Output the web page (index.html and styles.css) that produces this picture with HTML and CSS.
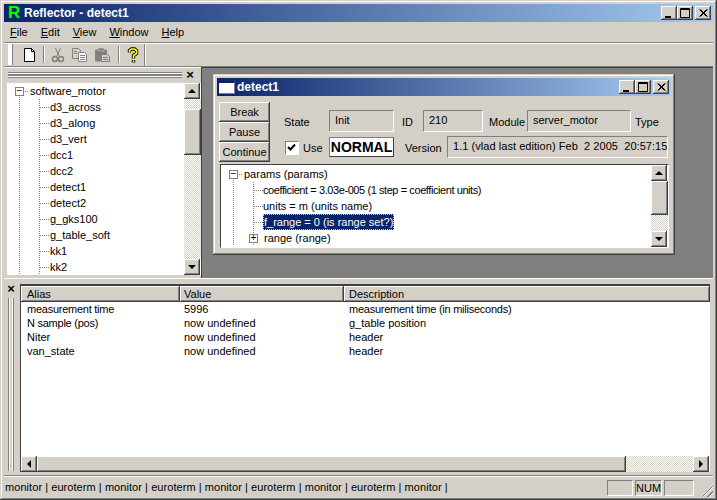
FILE: index.html
```html
<!DOCTYPE html>
<html lang="en">
<head>
    <meta charset="UTF-8">
    <title>Reflector - detect1</title>
    <link rel="stylesheet" href="styles.css">
</head>
<body>
    <div class="app">
        <div class="titlebar app-title">
            <span class="app-logo">R</span>
            <span class="title-text">Reflector - detect1</span>
            <div class="win-buttons">
                <span class="win-btn raised"><svg width="16" height="14"><path d="M4 10h6v2H4z" fill="#000"/></svg></span>
                <span class="win-btn raised"><svg width="16" height="14"><path d="M3.500 2.500h9v9h-9zM3 3.500h10" fill="none" stroke="#000"/></svg></span>
                <span class="win-btn raised close"><svg width="16" height="14"><path d="M4.500 3.500l7 7M5.500 3.500l7 7M11.500 3.500l-7 7M12.500 3.500l-7 7" fill="none" stroke="#000"/></svg></span>
            </div>
        </div>

        <div class="menubar">
            <span class="menu-item"><u>F</u>ile</span>
            <span class="menu-item"><u>E</u>dit</span>
            <span class="menu-item"><u>V</u>iew</span>
            <span class="menu-item"><u>W</u>indow</span>
            <span class="menu-item"><u>H</u>elp</span>
        </div>

        <div class="toolbar">
            <span class="tb-grip"></span>
            <span class="tb-icon tb-first">
                <svg width="16" height="16"><path d="M3.500 1.500h7l3 3v10h-10z" fill="#fff" stroke="#000"/><path d="M10.500 1.500v3h3" fill="none" stroke="#000"/></svg>
            </span>
            <span class="tb-sep"></span>
            <span class="tb-icon">
                <svg width="16" height="16"><path d="M5.500 1l3.500 8M10.500 1L7 9" fill="none" stroke="#808080"/><circle cx="5" cy="12" r="2.500" fill="none" stroke="#808080" stroke-width="1.500"/><circle cx="11" cy="12" r="2.500" fill="none" stroke="#808080" stroke-width="1.500"/></svg>
            </span>
            <span class="tb-icon">
                <svg width="18" height="16"><path d="M1.500 1.500h6l2 2v8h-8z" fill="#d4d0c8" stroke="#808080"/><path d="M7.500 5.500h6l2 2v7h-8z" fill="#fff" stroke="#808080"/><path d="M9 8.500h5M9 10.500h5M9 12.500h5M3 4.500h3M3 6.500h3" stroke="#808080"/></svg>
            </span>
            <span class="tb-icon">
                <svg width="18" height="16"><path d="M1 3.500q0-1 1-1h10q1 0 1 1v10q0 1-1 1H2q-1 0-1-1z" fill="#808080"/><path d="M4 1h6v3H4z" fill="#808080" stroke="#d4d0c8" stroke-width=".5"/><path d="M7.500 7.500h6l2 2v5h-8z" fill="#d4d0c8" stroke="#808080"/><path d="M9 10.500h5M9 12.500h5" stroke="#808080"/></svg>
            </span>
            <span class="tb-sep"></span>
            <span class="tb-icon">
                <svg width="16" height="16"><path d="M4.500 5.500V3.500L6.500 2h3l2 1.500v3L8.500 8.500v3" fill="none" stroke="#000" stroke-width="3.400"/><path d="M8.500 13v2.500" stroke="#000" stroke-width="3.400"/><path d="M4.500 5.500V3.500L6.500 2h3l2 1.500v3L8.500 8.500v3M8.500 13.200v2" fill="none" stroke="#ff0" stroke-width="1.600"/></svg>
            </span>
            <span class="tb-end"></span>
        </div>

        <div class="main-row">
            <div class="side-pane">
                <div class="side-head">
                    <span class="grip-h"></span>
                    <span class="pane-close">×</span>
                </div>
                <div class="side-body">
                    <div class="tree side-tree">
                        <div class="node root"><span class="expander">−</span>software_motor</div>
                        <div class="node leaf">d3_across</div>
                        <div class="node leaf">d3_along</div>
                        <div class="node leaf">d3_vert</div>
                        <div class="node leaf">dcc1</div>
                        <div class="node leaf">dcc2</div>
                        <div class="node leaf">detect1</div>
                        <div class="node leaf">detect2</div>
                        <div class="node leaf">g_gks100</div>
                        <div class="node leaf">g_table_soft</div>
                        <div class="node leaf">kk1</div>
                        <div class="node leaf">kk2</div>
                    </div>
                    <div class="vscroll side-scroll">
                        <span class="sb-btn raised"><i class="arrow-up"></i></span>
                        <span class="sb-track short"></span>
                        <span class="sb-thumb raised side-thumb"></span>
                        <span class="sb-track"></span>
                        <span class="sb-btn raised"><i class="arrow-down"></i></span>
                    </div>
                </div>
            </div>

            <div class="mdi-area">
                <div class="child-window">
                    <div class="titlebar child-title">
                        <span class="child-icon"></span>
                        <span class="title-text">detect1</span>
                        <div class="win-buttons">
                            <span class="win-btn raised"><svg width="16" height="14"><path d="M4 10h6v2H4z" fill="#000"/></svg></span>
                            <span class="win-btn raised"><svg width="16" height="14"><path d="M3.500 2.500h9v9h-9zM3 3.500h10" fill="none" stroke="#000"/></svg></span>
                            <span class="win-btn raised close"><svg width="16" height="14"><path d="M4.500 3.500l7 7M5.500 3.500l7 7M11.500 3.500l-7 7M12.500 3.500l-7 7" fill="none" stroke="#000"/></svg></span>
                        </div>
                    </div>

                    <div class="child-panel">
                        <div class="cmd-buttons">
                            <span class="cmd raised">Break</span>
                            <span class="cmd raised">Pause</span>
                            <span class="cmd raised">Continue</span>
                        </div>
                        <div class="info">
                            <div class="info-row first">
                                <span class="lbl lbl-state">State</span>
                                <span class="field f-state">Init</span>
                                <span class="lbl lbl-id">ID</span>
                                <span class="field f-id">210</span>
                                <span class="lbl lbl-module">Module</span>
                                <span class="field f-module">server_motor</span>
                                <span class="lbl">Type</span>
                            </div>
                            <div class="info-row second">
                                <span class="check"><svg width="9" height="9"><path d="M1 4l2.500 2.500L8 1.500" fill="none" stroke="#000" stroke-width="2"/></svg></span>
                                <span class="lbl lbl-use">Use</span>
                                <span class="normal-box">NORMAL</span>
                                <span class="lbl lbl-version">Version</span>
                                <span class="field f-version">1.1 (vlad last edition) Feb&nbsp; 2 2005&nbsp; 20:57:15</span>
                            </div>
                        </div>
                    </div>

                    <div class="params-box">
                        <div class="tree params-tree">
                            <div class="node proot"><span class="expander">−</span>params (params)</div>
                            <div class="node pleaf tighter">coefficient = 3.03e-005 (1 step = coefficient units)</div>
                            <div class="node pleaf">units = m (units name)</div>
                            <div class="node pleaf"><span class="selected">f_range = 0 (is range set?)</span></div>
                            <div class="node pbranch"><span class="expander">+</span>range (range)</div>
                        </div>
                        <div class="vscroll params-scroll">
                            <span class="sb-btn raised"><i class="arrow-up"></i></span>
                            <span class="sb-thumb raised params-thumb"></span>
                            <span class="sb-track"></span>
                            <span class="sb-btn raised"><i class="arrow-down"></i></span>
                        </div>
                    </div>
                </div>
            </div>
        </div>

        <div class="bottom-pane">
            <div class="bottom-side">
                <span class="pane-close">×</span>
                <span class="grip-v"></span>
            </div>
            <div class="list-frame">
                <div class="list-head">
                    <span class="col-head raised">Alias</span>
                    <span class="col-head raised">Value</span>
                    <span class="col-head raised">Description</span>
                </div>
                <div class="list-body">
                    <div class="list-row"><span class="tight">measurement time</span><span>5996</span><span class="tight">measurement time (in miliseconds)</span></div>
                    <div class="list-row"><span class="tight">N sample (pos)</span><span>now undefined</span><span>g_table position</span></div>
                    <div class="list-row"><span>Niter</span><span>now undefined</span><span>header</span></div>
                    <div class="list-row"><span>van_state</span><span>now undefined</span><span>header</span></div>
                </div>
                <div class="hscroll">
                    <span class="sb-btn raised"><i class="arrow-left"></i></span>
                    <span class="sb-thumb raised h-thumb"></span>
                    <span class="sb-track"></span>
                    <span class="sb-btn raised"><i class="arrow-right"></i></span>
                </div>
            </div>
        </div>

        <div class="statusbar">
            <span class="status-text">monitor | euroterm | monitor | euroterm | monitor | euroterm | monitor | euroterm | monitor |</span>
            <span class="status-panel p1"></span>
            <span class="status-panel p2">NUM</span>
            <span class="status-panel p3"></span>
            <span class="size-grip"></span>
        </div>
    </div>
</body>
</html>
```

FILE: styles.css
```css
* {
    box-sizing: border-box;
}

body {
    margin: 0;
    background-color: #d4d0c8;
    font-family: 'Liberation Sans', Arial, sans-serif;
    font-size: 11px;
    color: #000;
    overflow: hidden;
}

.app {
    width: 717px;
    height: 500px;
    padding: 4px;
    display: flex;
    flex-direction: column;
    background-color: #d4d0c8;
    box-shadow: inset -1px -1px #404040, inset 1px 1px #d4d0c8, inset -2px -2px #808080, inset 2px 2px #fff;
}

.raised {
    background-color: #d4d0c8;
    box-shadow: inset -1px -1px #404040, inset 1px 1px #fff, inset -2px -2px #808080, inset 2px 2px #d4d0c8;
}

.tight {
    letter-spacing: -0.25px;
}

.tighter {
    letter-spacing: -0.42px;
}

/* title bars */
.titlebar {
    height: 18px;
    flex: none;
    display: flex;
    align-items: center;
    color: white;
    font-weight: bold;
    background: linear-gradient(to right, #0a246a, #a6caf0);
}

.app-title {
    padding-left: 4px;
    padding-right: 2px;
}

.app-logo {
    width: 16px;
    font-size: 17px;
    line-height: 18px;
    color: #00ff00;
}

.title-text {
    font-size: 12px;
}

.win-buttons {
    margin-left: auto;
    display: flex;
}

.win-btn {
    width: 16px;
    height: 14px;
    display: block;
}

.win-btn svg {
    display: block;
}

.win-btn.close {
    margin-left: 2px;
}

/* menu + toolbar */
.menubar {
    height: 19px;
    flex: none;
    display: flex;
    align-items: center;
    padding-left: 6px;
    gap: 13px;
    font-size: 11px;
}

.toolbar {
    height: 25px;
    flex: none;
    margin-top: 1px;
    display: flex;
    align-items: center;
    gap: 5px;
    border-top: 1px solid #808080;
    border-bottom: 1px solid #808080;
    box-shadow: inset 0 1px #fff, 0 1px #fff;
}

.tb-grip {
    width: 5px;
    height: 21px;
    margin-left: 4px;
    background-color: #fff;
    border-right: 1px solid #808080;
}

.tb-icon {
    height: 16px;
    display: flex;
}

.tb-icon svg {
    display: block;
}

.tb-first {
    margin-left: 3px;
}

.tb-sep {
    width: 2px;
    height: 17px;
    margin-left: 1px;
    border-left: 1px solid #808080;
    border-right: 1px solid #fff;
}

.tb-end {
    width: 2px;
    height: 22px;
    margin-left: -2px;
    border-left: 1px solid #808080;
    border-right: 1px solid #fff;
}

/* upper panes */
.main-row {
    height: 211px;
    flex: none;
    display: flex;
}

.side-pane {
    width: 197px;
    flex: none;
    display: flex;
    flex-direction: column;
}

.side-head {
    height: 16px;
    display: flex;
    align-items: center;
    padding: 0 4px;
}

.grip-h {
    width: 174px;
    height: 6px;
    border-top: 1px solid #808080;
    border-bottom: 1px solid #808080;
    background: linear-gradient(#fff 0 1px, #808080 1px 3px, #fff 3px);
}

.pane-close {
    width: 14px;
    text-align: center;
    font-size: 13px;
    line-height: 12px;
    font-weight: bold;
}

.side-head .pane-close {
    margin-left: 1px;
}

.side-body {
    height: 192px;
    margin-left: 3px;
    display: flex;
    background-color: white;
}

.tree {
    flex: 1;
    background-color: white;
    overflow: hidden;
}

.node {
    height: 16px;
    line-height: 16px;
    white-space: nowrap;
    display: flex;
    align-items: center;
}

.expander {
    width: 9px;
    height: 9px;
    flex: none;
    border: 1px solid #808080;
    background-color: white;
    font-size: 10px;
    line-height: 6px;
    text-align: center;
}

/* dotted tree lines are drawn as backgrounds */
.side-tree .root {
    padding-left: 8px;
    background:
        repeating-linear-gradient(#808080 0 1px, transparent 1px 2px) 12px 12px / 1px 4px no-repeat,
        repeating-linear-gradient(to right, #808080 0 1px, transparent 1px 2px) 18px 8px / 4px 1px no-repeat;
}

.side-tree .root .expander {
    margin-right: 6px;
}

.side-tree .leaf {
    padding-left: 43px;
    background:
        repeating-linear-gradient(#808080 0 1px, transparent 1px 2px) 12px 0 / 1px 100% no-repeat,
        repeating-linear-gradient(#808080 0 1px, transparent 1px 2px) 32px 0 / 1px 100% no-repeat,
        repeating-linear-gradient(to right, #808080 0 1px, transparent 1px 2px) 33px 8px / 9px 1px no-repeat;
}

.vscroll {
    width: 17px;
    flex: none;
    display: flex;
    flex-direction: column;
}

.hscroll {
    height: 16px;
    flex: none;
    display: flex;
}

.sb-btn {
    width: 16px;
    height: 16px;
    flex: none;
    display: flex;
    align-items: center;
    justify-content: center;
}

.sb-track {
    flex: 1;
    background: repeating-conic-gradient(#fff 0 25%, #d4d0c8 0 50%) 0 0 / 2px 2px;
}

.sb-track.short {
    flex: none;
    height: 10px;
}

.sb-thumb {
    flex: none;
    display: block;
}

.side-thumb {
    height: 46px;
}

.params-thumb {
    height: 34px;
}

.h-thumb {
    width: 589px;
}

.arrow-up,
.arrow-down,
.arrow-left,
.arrow-right {
    width: 0;
    height: 0;
    border: 4px solid transparent;
}

.arrow-up {
    border-bottom-color: #000;
    border-top-width: 0;
}

.arrow-down {
    border-top-color: #000;
    border-bottom-width: 0;
}

.arrow-left {
    border-right-color: #000;
    border-left-width: 0;
}

.arrow-right {
    border-left-color: #000;
    border-right-width: 0;
}

/* mdi */
.mdi-area {
    flex: 1;
    background-color: #808080;
    border-top: 1px solid #404040;
    border-left: 1px solid #404040;
    padding: 6px 0 0 11px;
}

.child-window {
    width: 462px;
    height: 181px;
    padding: 4px;
    background-color: #d4d0c8;
    box-shadow: inset -1px -1px #404040, inset 1px 1px #d4d0c8, inset -2px -2px #808080, inset 2px 2px #fff;
}

.child-title {
    padding-left: 2px;
    padding-right: 2px;
}

.child-icon {
    width: 16px;
    height: 13px;
    margin-right: 2px;
    background-color: white;
    border-top: 2px solid #0a246a;
    border-right: 1px solid #808080;
    border-bottom: 1px solid #808080;
}

.child-panel {
    height: 68px;
    display: flex;
}

.cmd-buttons {
    width: 51px;
    flex: none;
    margin: 6px 0 0 2px;
    display: flex;
    flex-direction: column;
}

.cmd {
    height: 20px;
    line-height: 20px;
    text-align: center;
    font-size: 11px;
}

.info {
    flex: 1;
    padding-left: 14px;
}

.info-row {
    display: flex;
    align-items: center;
}

.info-row.first {
    height: 22px;
    margin-top: 14px;
}

.info-row.second {
    height: 22px;
    margin-top: 4px;
}

.lbl {
    flex: none;
    font-size: 11px;
    padding-top: 2px;
}

.lbl-state {
    width: 45px;
}

.lbl-id {
    width: 21px;
    margin-left: 8px;
}

.lbl-module {
    width: 38px;
    margin-left: 6px;
}

.field {
    height: 22px;
    flex: none;
    padding: 0 5px 3px;
    display: flex;
    align-items: center;
    white-space: nowrap;
    overflow: hidden;
    border-top: 1px solid #808080;
    border-left: 1px solid #808080;
    border-right: 1px solid #fff;
    border-bottom: 1px solid #fff;
}

.f-state {
    width: 65px;
}

.f-id {
    width: 60px;
}

.f-module {
    width: 104px;
    margin-right: 4px;
}

.f-version {
    width: 221px;
    padding-bottom: 2px;
    letter-spacing: 0.05px;
}

.check {
    width: 13px;
    height: 13px;
    flex: none;
    margin: 0 5px 0 1px;
    padding: 1px;
    background-color: white;
    border-top: 1px solid #808080;
    border-left: 1px solid #808080;
    box-shadow: 1px 1px #fff;
}

.check svg {
    display: block;
}

.lbl-use {
    width: 26px;
}

.normal-box {
    width: 65px;
    height: 20px;
    flex: none;
    background-color: white;
    border: 1px solid #808080;
    border-right-color: #404040;
    border-bottom-color: #404040;
    font-size: 14px;
    font-weight: bold;
    line-height: 19px;
    text-align: center;
}

.lbl-version {
    width: 42px;
    margin-left: 11px;
}

.params-box {
    width: 449px;
    height: 84px;
    margin-left: 3px;
    display: flex;
    border: 1px solid;
    border-color: #404040 #fff #fff #404040;
    background-color: white;
}

.params-tree {
    padding-top: 1px;
}

.params-tree .proot {
    padding-left: 8px;
    background:
        repeating-linear-gradient(#808080 0 1px, transparent 1px 2px) 12px 12px / 1px 4px no-repeat,
        repeating-linear-gradient(to right, #808080 0 1px, transparent 1px 2px) 18px 8px / 4px 1px no-repeat;
}

.params-tree .expander {
    margin-right: 6px;
}

.params-tree .pleaf {
    padding-left: 42px;
    background:
        repeating-linear-gradient(#808080 0 1px, transparent 1px 2px) 12px 0 / 1px 100% no-repeat,
        repeating-linear-gradient(#808080 0 1px, transparent 1px 2px) 32px 0 / 1px 100% no-repeat,
        repeating-linear-gradient(to right, #808080 0 1px, transparent 1px 2px) 33px 8px / 9px 1px no-repeat;
}

.params-tree .pbranch {
    padding-left: 28px;
    background:
        repeating-linear-gradient(#808080 0 1px, transparent 1px 2px) 12px 0 / 1px 100% no-repeat,
        repeating-linear-gradient(#808080 0 1px, transparent 1px 2px) 32px 0 / 1px 100% no-repeat;
}

.selected {
    height: 16px;
    line-height: 14px;
    padding: 0;
    color: white;
    background-color: #0a246a;
    border: 1px dotted #d4d080;
}

/* bottom list */
.bottom-pane {
    height: 197px;
    flex: none;
    display: flex;
    padding-top: 5px;
    border-top: 1px solid #fff;
}

.bottom-side {
    width: 16px;
    flex: none;
    margin-top: -1px;
    display: flex;
    flex-direction: column;
    align-items: flex-start;
}

.grip-v {
    width: 6px;
    height: 173px;
    margin: 3px 0 0 4px;
    border-left: 1px solid #808080;
    border-right: 1px solid #808080;
    background: linear-gradient(to right, #fff 0 1px, #d4d0c8 1px 3px, #fff 3px);
}

.list-frame {
    width: 690px;
    height: 188px;
    display: flex;
    flex-direction: column;
    border-top: 2px solid #404040;
    border-left: 1px solid #404040;
    background-color: white;
}

.list-head {
    height: 16px;
    flex: none;
    display: grid;
    grid-template-columns: 159px 164px 1fr;
}

.col-head {
    line-height: 16px;
    padding-left: 4px;
}

.col-head:first-child {
    padding-left: 6px;
}

.col-head:last-child {
    padding-left: 5px;
}

.list-body {
    flex: 1;
}

.list-row {
    height: 14px;
    line-height: 14px;
    display: grid;
    grid-template-columns: 159px 164px 1fr;
}

.list-row span {
    padding-left: 4px;
}

.list-row span:first-child {
    padding-left: 6px;
}

.list-row span:last-child {
    padding-left: 5px;
}

.hscroll {
    width: 688px;
}

/* status bar */
.statusbar {
    height: 22px;
    flex: none;
    display: flex;
    align-items: center;
    border-top: 1px solid #808080;
    box-shadow: inset 0 1px #fff;
    padding-left: 1px;
    padding-top: 2px;
}

.status-text {
    width: 600px;
    padding-bottom: 2px;
    font-size: 11px;
    letter-spacing: 0.06px;
    white-space: nowrap;
}

.status-panel {
    height: 16px;
    text-align: center;
    line-height: 15px;
    margin-left: 2px;
    border: 1px solid;
    border-color: #808080 #fff #fff #808080;
}

.p1 {
    width: 26px;
}

.p2 {
    width: 27px;
}

.p3 {
    width: 30px;
}

.size-grip {
    width: 13px;
    height: 13px;
    margin-left: 6px;
    align-self: flex-end;
    background: repeating-linear-gradient(135deg, transparent 0 2px, #808080 2px 3px, #fff 3px 4px);
    clip-path: polygon(100% 0, 100% 100%, 0 100%);
}
```
